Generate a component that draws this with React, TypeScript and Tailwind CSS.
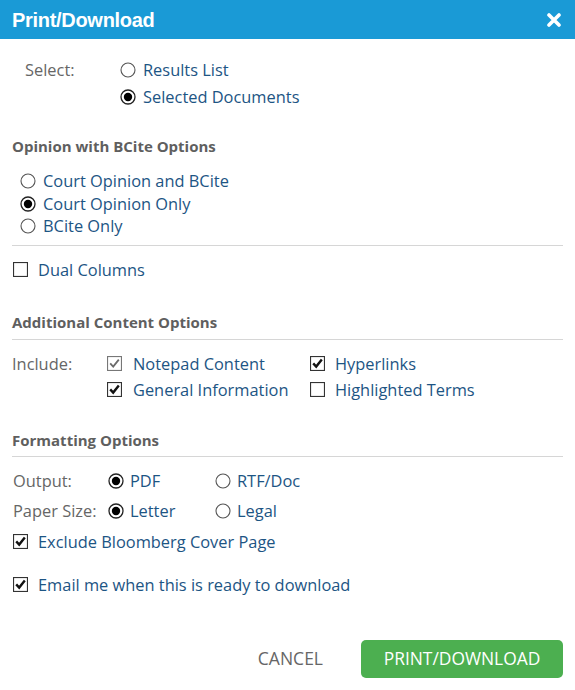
import React from "react";

const font = { fontFamily: '"Open Sans", "Liberation Sans", sans-serif' };

function Radio({ on }: { on?: boolean }) {
  return (
    <svg width="16" height="16" viewBox="0 0 16 16" className="shrink-0">
      <circle cx="8" cy="8" r="7" fill="white" stroke={on ? "#222" : "#555"} strokeWidth={on ? 1.3 : 1.1} />
      {on && <circle cx="8" cy="8" r="4.2" fill="#000" />}
    </svg>
  );
}

function Check({ on, dim }: { on?: boolean; dim?: boolean }) {
  const c = dim ? "#6b6b6b" : "#111";
  return (
    <svg width="15" height="15" viewBox="0 0 15 15" className="shrink-0">
      <rect x="0.5" y="0.5" width="14" height="14" fill="white" stroke={dim ? "#777" : "#333"} strokeWidth="1.2" />
      {on && <path d="M3.2 7.4 L6.2 10.6 L11.8 3.6" fill="none" stroke={c} strokeWidth={dim ? 1.8 : 2.4} />}
    </svg>
  );
}

function Opt({ children, kind, on, dim, gap = "gap-[7px]" }: { children: React.ReactNode; kind: "r" | "c"; on?: boolean; dim?: boolean; gap?: string }) {
  return (
    <div className={`flex items-center ${gap}`}>
      {kind === "r" ? <Radio on={on} /> : <Check on={on} dim={dim} />}
      <span className="text-[#1d5584]">{children}</span>
    </div>
  );
}

function Heading({ children, mt }: { children: React.ReactNode; mt: string }) {
  return (
    <div className={`${mt} text-[15px] font-bold leading-[20px] text-[#5f5f5f]`}>{children}</div>
  );
}

export default function App() {
  return (
    <div style={font} className="w-[575px] h-[690px] bg-white text-[16.4px] overflow-hidden">
      <div className="h-[39px] bg-[#1a9ad6] flex items-center justify-between pl-3 pr-[14px]">
        <span className="text-white font-bold text-[20px] tracking-[-0.3px]" style={{ fontFamily: '"Liberation Sans", Arial, sans-serif' }}>
          Print/Download
        </span>
        <svg width="14" height="14" viewBox="0 0 14 14">
          <path d="M2 2 L12 12 M12 2 L2 12" stroke="white" strokeWidth="3.6" strokeLinecap="round" />
        </svg>
      </div>

      <div className="px-3">
        <div className="pt-[17px] flex">
          <div className="w-[108px] pl-[13px] leading-[27px] text-[#666]">Select:</div>
          <div className="flex flex-col leading-[27px]">
            <Opt kind="r">Results List</Opt>
            <Opt kind="r" on>Selected Documents</Opt>
          </div>
        </div>

        <Heading mt="mt-[26px]">Opinion with BCite Options</Heading>
        <div className="mt-[14px] pl-[8px] flex flex-col leading-[22.5px]">
          <Opt kind="r">Court Opinion and BCite</Opt>
          <Opt kind="r" on>Court Opinion Only</Opt>
          <Opt kind="r">BCite Only</Opt>
        </div>
        <div className="mt-[7px] border-t border-[#d6d6d6]" />
        <div className="mt-[12px] pl-[1px] leading-[24px]">
          <Opt kind="c" gap="gap-[10px]">Dual Columns</Opt>
        </div>

        <Heading mt="mt-[30px]">Additional Content Options</Heading>
        <div className="mt-[7px] border-t border-[#d6d6d6]" />
        <div className="mt-[11px] flex leading-[26px]">
          <div className="w-[95px] text-[#666]">Include:</div>
          <div className="grid grid-cols-[203px_auto]">
            <Opt kind="c" on dim gap="gap-[11px]">Notepad Content</Opt>
            <Opt kind="c" on gap="gap-[10px]">Hyperlinks</Opt>
            <Opt kind="c" on gap="gap-[11px]">General Information</Opt>
            <Opt kind="c" gap="gap-[10px]">Highlighted Terms</Opt>
          </div>
        </div>

        <Heading mt="mt-[27px]">Formatting Options</Heading>
        <div className="mt-[6px] border-t border-[#d6d6d6]" />
        <div className="mt-[9px] flex flex-col">
          <div className="flex leading-[30px]">
            <div className="w-[96px] pl-[1px] text-[#666]">Output:</div>
            <div className="w-[107px]"><Opt kind="r" on gap="gap-[6px]">PDF</Opt></div>
            <Opt kind="r" gap="gap-[6px]">RTF/Doc</Opt>
          </div>
          <div className="flex leading-[30px]">
            <div className="w-[96px] pl-[1px] text-[#666]">Paper Size:</div>
            <div className="w-[107px]"><Opt kind="r" on gap="gap-[6px]">Letter</Opt></div>
            <Opt kind="r" gap="gap-[6px]">Legal</Opt>
          </div>
          <div className="leading-[32px] pl-[1px]">
            <Opt kind="c" on gap="gap-[10px]">Exclude Bloomberg Cover Page</Opt>
          </div>
        </div>
        <div className="mt-[15px] leading-[24px] pl-[1px]">
          <Opt kind="c" on gap="gap-[10px]">Email me when this is ready to download</Opt>
        </div>

        <div className="mt-[43px] flex items-center justify-end">
          <button className="mr-[38px] text-[#666] text-[17.5px]">CANCEL</button>
          <button className="h-[38px] w-[202px] rounded-[5px] bg-[#4caf50] text-white text-[17.4px]">PRINT/DOWNLOAD</button>
        </div>
      </div>
    </div>
  );
}
